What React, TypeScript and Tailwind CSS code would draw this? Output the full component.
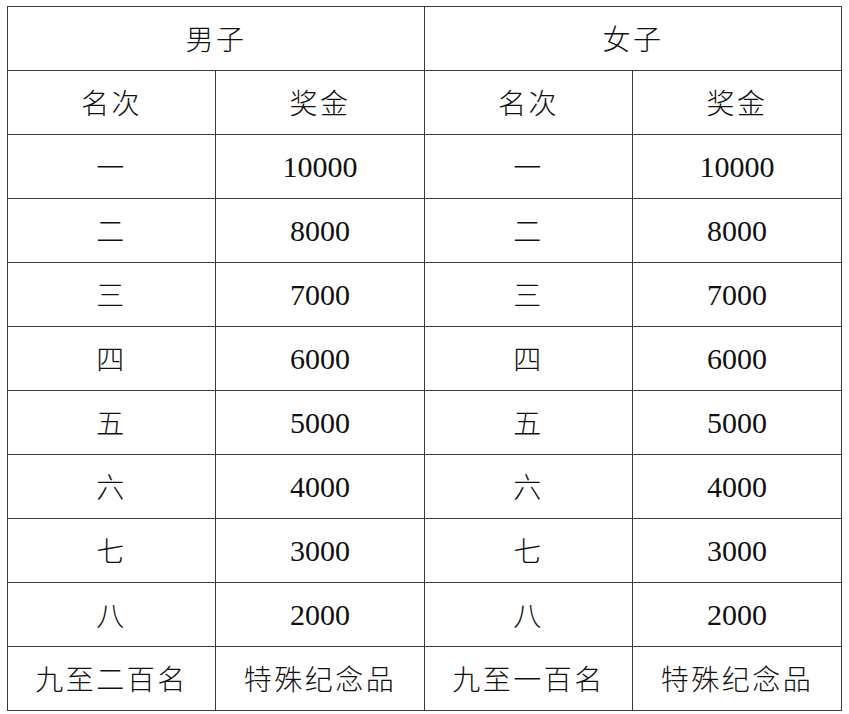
const rows = [
  ['一', '10000'],
  ['二', '8000'],
  ['三', '7000'],
  ['四', '6000'],
  ['五', '5000'],
  ['六', '4000'],
  ['七', '3000'],
  ['八', '2000'],
]

// CJK labels: thin sans, slightly spaced
const cjk = 'font-light text-[28px] tracking-[2.5px] leading-none pb-[2px]'
// prize amounts in Times-style digits
const num = "font-['Times_New_Roman',serif] text-[30px] leading-none"
const cell = 'border border-[#3a3a3a] text-center align-middle p-0 text-[#111]'

export default function App() {
  return (
    <div className="w-[849px] h-[714px] bg-white pt-[6px] pl-[7px] font-['Noto_Sans_CJK_SC',sans-serif]">
      <table className="w-[835px] table-fixed border-collapse">
        <colgroup>
          <col className="w-[208px]" />
          <col className="w-[209px]" />
          <col className="w-[208px]" />
          <col className="w-[209px]" />
        </colgroup>
        <tbody>
          <tr className="h-[64px]">
            <td colSpan={2} className={`${cell} ${cjk}`}>男子</td>
            <td colSpan={2} className={`${cell} ${cjk}`}>女子</td>
          </tr>
          <tr className="h-[64px]">
            <td className={`${cell} ${cjk}`}>名次</td>
            <td className={`${cell} ${cjk}`}>奖金</td>
            <td className={`${cell} ${cjk}`}>名次</td>
            <td className={`${cell} ${cjk}`}>奖金</td>
          </tr>
          {rows.map(([rank, prize]) => (
            <tr key={rank} className="h-[64px]">
              <td className={`${cell} ${cjk}`}>{rank}</td>
              <td className={`${cell} ${num}`}>{prize}</td>
              <td className={`${cell} ${cjk}`}>{rank}</td>
              <td className={`${cell} ${num}`}>{prize}</td>
            </tr>
          ))}
          <tr className="h-[64px]">
            <td className={`${cell} ${cjk}`}>九至二百名</td>
            <td className={`${cell} ${cjk}`}>特殊纪念品</td>
            <td className={`${cell} ${cjk}`}>九至一百名</td>
            <td className={`${cell} ${cjk}`}>特殊纪念品</td>
          </tr>
        </tbody>
      </table>
    </div>
  )
}
